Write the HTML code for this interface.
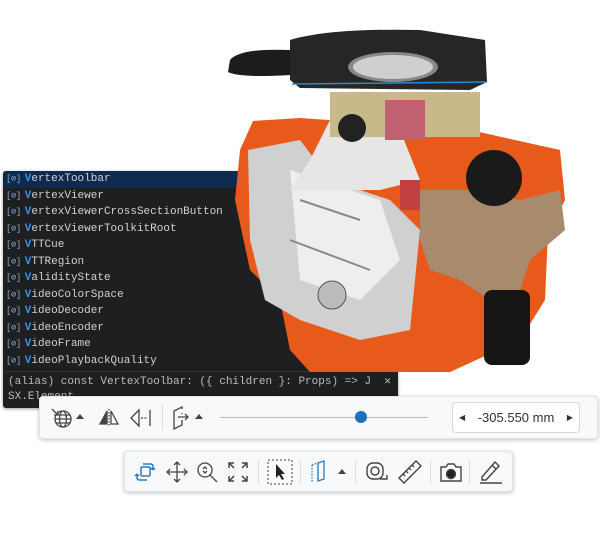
<!DOCTYPE html>
<html><head><style>
body{margin:0;width:600px;height:537px;background:#fff;position:relative;overflow:hidden;font-family:"Liberation Sans",sans-serif}
#panel{position:absolute;left:3px;top:171px;width:395px;height:237px;background:#1e1f21;border-radius:3px;box-shadow:0 1px 3px rgba(0,0,0,.4);font-family:"Liberation Mono",monospace;font-size:11px;color:#d0d0d0;overflow:hidden}
.r{height:16.5px;line-height:16.5px;padding-left:3px;white-space:nowrap}
.r.sel{background:#0e2b4f}
.r i{font-style:normal;color:#8aa8cc;font-size:9px;margin-right:4px;letter-spacing:-0.5px}
.r b{color:#3b8fe6;font-weight:bold}
#info{position:absolute;left:0;top:200px;width:100%;border-top:1px solid #333;padding:3px 5px;box-sizing:border-box;line-height:15px;color:#bbb;white-space:nowrap}
.tb{position:absolute;background:#f8f9fa;border:1px solid #e2e4e6;border-radius:4px;box-shadow:0 1px 4px rgba(0,0,0,.25)}
svg.i{position:absolute}
</style></head><body>
<div id="panel">
<div class="r sel"><i>[⊘]</i><b>V</b>ertexToolbar</div>
<div class="r"><i>[⊘]</i><b>V</b>ertexViewer</div>
<div class="r"><i>[⊘]</i><b>V</b>ertexViewerCrossSectionButton</div>
<div class="r"><i>[⊘]</i><b>V</b>ertexViewerToolkitRoot</div>
<div class="r"><i>[⊘]</i><b>V</b>TTCue</div>
<div class="r"><i>[⊘]</i><b>V</b>TTRegion</div>
<div class="r"><i>[⊘]</i><b>V</b>alidityState</div>
<div class="r"><i>[⊘]</i><b>V</b>ideoColorSpace</div>
<div class="r"><i>[⊘]</i><b>V</b>ideoDecoder</div>
<div class="r"><i>[⊘]</i><b>V</b>ideoEncoder</div>
<div class="r"><i>[⊘]</i><b>V</b>ideoFrame</div>
<div class="r"><i>[⊘]</i><b>V</b>ideoPlaybackQuality</div>
<div id="info">(alias) const VertexToolbar: ({ children }: Props) =&gt; J &nbsp;✕<br>SX.Element</div>
</div>
<svg style="position:absolute;left:0;top:0" width="600" height="400">
<path d="M253 121 L300 118 L470 130 L560 150 L565 200 L548 232 L545 300 L520 340 L450 372 L310 372 L290 350 L280 300 L250 270 L235 200 L240 150 Z" fill="#e85a1c"/>
<path d="M248 150 L300 140 L330 180 L390 200 L420 230 L410 330 L360 340 L300 320 L265 300 L250 240 Z" fill="#d0d0d0"/>
<path d="M290 170 L380 200 L400 260 L360 300 L300 280 Z" fill="#eeeeee"/>
<path d="M300 200 L360 220 M290 240 L370 270" stroke="#888" stroke-width="2"/>
<circle cx="332" cy="295" r="14" fill="#bbb" stroke="#555"/>
<path d="M420 190 L470 190 L520 200 L560 190 L565 230 L530 260 L520 290 L490 300 L460 280 L430 270 L420 240 Z" fill="#a88a6c"/>
<path d="M290 190 L310 160 L330 120 L400 130 L420 180 L380 190 Z" fill="#e6e6e6"/>
<circle cx="494" cy="178" r="28" fill="#1a1a1a"/>
<rect x="484" y="290" width="46" height="75" rx="8" fill="#151515"/>
<rect x="330" y="92" width="150" height="45" fill="#c9b98a"/>
<rect x="385" y="100" width="40" height="40" fill="#c06070"/>
<circle cx="352" cy="128" r="14" fill="#222"/>
<path d="M230 60 Q240 48 290 50 L290 75 Q240 78 228 72 Z" fill="#1c1c1c"/>
<path d="M290 40 Q330 28 420 30 L485 40 L487 82 L470 90 L300 88 L290 80 Z" fill="#262626"/>
<path d="M292 84 L486 82" stroke="#2a8acb" stroke-width="1.5"/>
<ellipse cx="393" cy="67" rx="45" ry="15" fill="#888"/>
<ellipse cx="393" cy="67" rx="40" ry="12" fill="#cfcfcf"/>
<rect x="400" y="180" width="20" height="30" fill="#c04040"/>
</svg>
<div class="tb" style="left:39px;top:396px;width:557px;height:41px">
<svg class="i" style="left:10px;top:9px" width="24" height="24" viewBox="0 0 24 24" fill="none" stroke="#444" stroke-width="1.3"><circle cx="13" cy="13" r="8"/><ellipse cx="13" cy="13" rx="3.5" ry="8"/><path d="M5 13h16M6.5 9h13M6.5 17h13M2 3l6 6M8 5v4H4"/></svg>
<svg class="i" style="left:36px;top:16px" width="8" height="6"><path d="M0 6L4 1L8 6Z" fill="#444"/></svg>
<svg class="i" style="left:58px;top:10px" width="22" height="22" fill="none" stroke="#444" stroke-width="1.3"><path d="M9 4L9 17L2 17Z" fill="#444"/><path d="M13 4L13 17L20 17Z"/><path d="M11 2V20" stroke-dasharray="1.5 1.5"/></svg>
<svg class="i" style="left:89px;top:10px" width="24" height="22" fill="none" stroke="#444" stroke-width="1.3"><path d="M10 3L10 19L2 11Z"/><path d="M12 11h6" stroke-dasharray="2 1.5"/><path d="M21 3V19"/></svg>
<div style="position:absolute;left:122px;top:8px;width:1px;height:25px;background:#ddd"></div>
<svg class="i" style="left:131px;top:8px" width="24" height="26" fill="none" stroke="#444" stroke-width="1.3"><path d="M3 6L11 2V4M3 6V24L11 20V15M11 9V8M7 12H17M14 9L17 12L14 15"/></svg>
<svg class="i" style="left:155px;top:16px" width="8" height="6"><path d="M0 6L4 1L8 6Z" fill="#444"/></svg>
<div style="position:absolute;left:180px;top:20px;width:208px;height:1px;background:#bbb"></div>
<div style="position:absolute;left:315px;top:14px;width:12px;height:12px;border-radius:50%;background:#1f6fbf"></div>
<div style="position:absolute;left:412px;top:5px;width:126px;height:29px;border:1px solid #d8d8d8;border-radius:4px;background:#fff;font-size:13px;line-height:29px;text-align:center;color:#333">-305.550 mm
<span style="position:absolute;left:6px;top:0;font-size:8px;color:#333">◀</span><span style="position:absolute;right:6px;top:0;font-size:8px;color:#333">▶</span></div>
</div>
<div class="tb" style="left:124px;top:451px;width:387px;height:39px">
<svg class="i" style="left:8px;top:8px" width="24" height="24" fill="none" stroke="#2a7bc6" stroke-width="1.5"><rect x="8" y="7" width="9" height="9" rx="1"/><path d="M4 14V18Q4 20 7 20H14M4 14L2 16M4 14L6 16M20 10V6Q20 4 17 4H10M20 10L18 8M20 10L22 8"/></svg>
<svg class="i" style="left:40px;top:8px" width="24" height="24" fill="none" stroke="#444" stroke-width="1.3"><path d="M12 2V22M2 12H22M9 5L12 2L15 5M9 19L12 22L15 19M5 9L2 12L5 15M19 9L22 12L19 15"/></svg>
<svg class="i" style="left:70px;top:8px" width="24" height="24" fill="none" stroke="#444" stroke-width="1.3"><circle cx="10" cy="10" r="7"/><path d="M15 15L22 22M8 9L10 7L12 9M8 11L10 13L12 11"/></svg>
<svg class="i" style="left:102px;top:9px" width="22" height="22" fill="none" stroke="#444" stroke-width="1.5"><path d="M2 7V2H7M2 2L7 7M20 7V2H15M20 2L15 7M2 15V20H7M2 20L7 15M20 15V20H15M20 20L15 15"/></svg>
<div style="position:absolute;left:133px;top:8px;width:1px;height:24px;background:#ddd"></div>
<svg class="i" style="left:142px;top:7px" width="26" height="26" fill="none"><rect x="1" y="1" width="24" height="24" stroke="#444" stroke-dasharray="2 2"/><path d="M9 5L9 19L12 16L15 21L17 20L14 15H18Z" fill="#222"/></svg>
<div style="position:absolute;left:175px;top:8px;width:1px;height:24px;background:#ddd"></div>
<svg class="i" style="left:184px;top:7px" width="20" height="26" fill="none" stroke="#2a7bc6" stroke-width="1.3"><path d="M3 6V24M9 4V22M3 6L9 4" stroke-dasharray="1.5 1.5"/><path d="M9 4L15 2V20L9 22Z"/></svg>
<svg class="i" style="left:213px;top:16px" width="8" height="6"><path d="M0 6L4 1L8 6Z" fill="#444"/></svg>
<div style="position:absolute;left:230px;top:8px;width:1px;height:24px;background:#ddd"></div>
<svg class="i" style="left:240px;top:9px" width="24" height="22" fill="none" stroke="#444" stroke-width="1.4"><rect x="2" y="2" width="16" height="16" rx="6"/><circle cx="10" cy="10" r="4"/><path d="M15 18H22V14"/></svg>
<svg class="i" style="left:272px;top:7px" width="26" height="26" fill="none" stroke="#444" stroke-width="1.4"><path d="M2 19L19 2L24 7L7 24Z"/><path d="M6 15L8 17M9 12L11 14M12 9L14 11M15 6L17 8"/></svg>
<div style="position:absolute;left:305px;top:8px;width:1px;height:24px;background:#ddd"></div>
<svg class="i" style="left:314px;top:9px" width="24" height="22" fill="none" stroke="#444" stroke-width="1.4"><path d="M2 6H7L9 3H15L17 6H22V20H2Z"/><circle cx="12" cy="13" r="4.5" fill="#222"/></svg>
<div style="position:absolute;left:344px;top:8px;width:1px;height:24px;background:#ddd"></div>
<svg class="i" style="left:353px;top:7px" width="26" height="26" fill="none" stroke="#444" stroke-width="1.4"><path d="M4 18L17 3L21 7L8 21H4Z M14 6L18 10M2 24H24"/></svg>
</div>
</body></html>
